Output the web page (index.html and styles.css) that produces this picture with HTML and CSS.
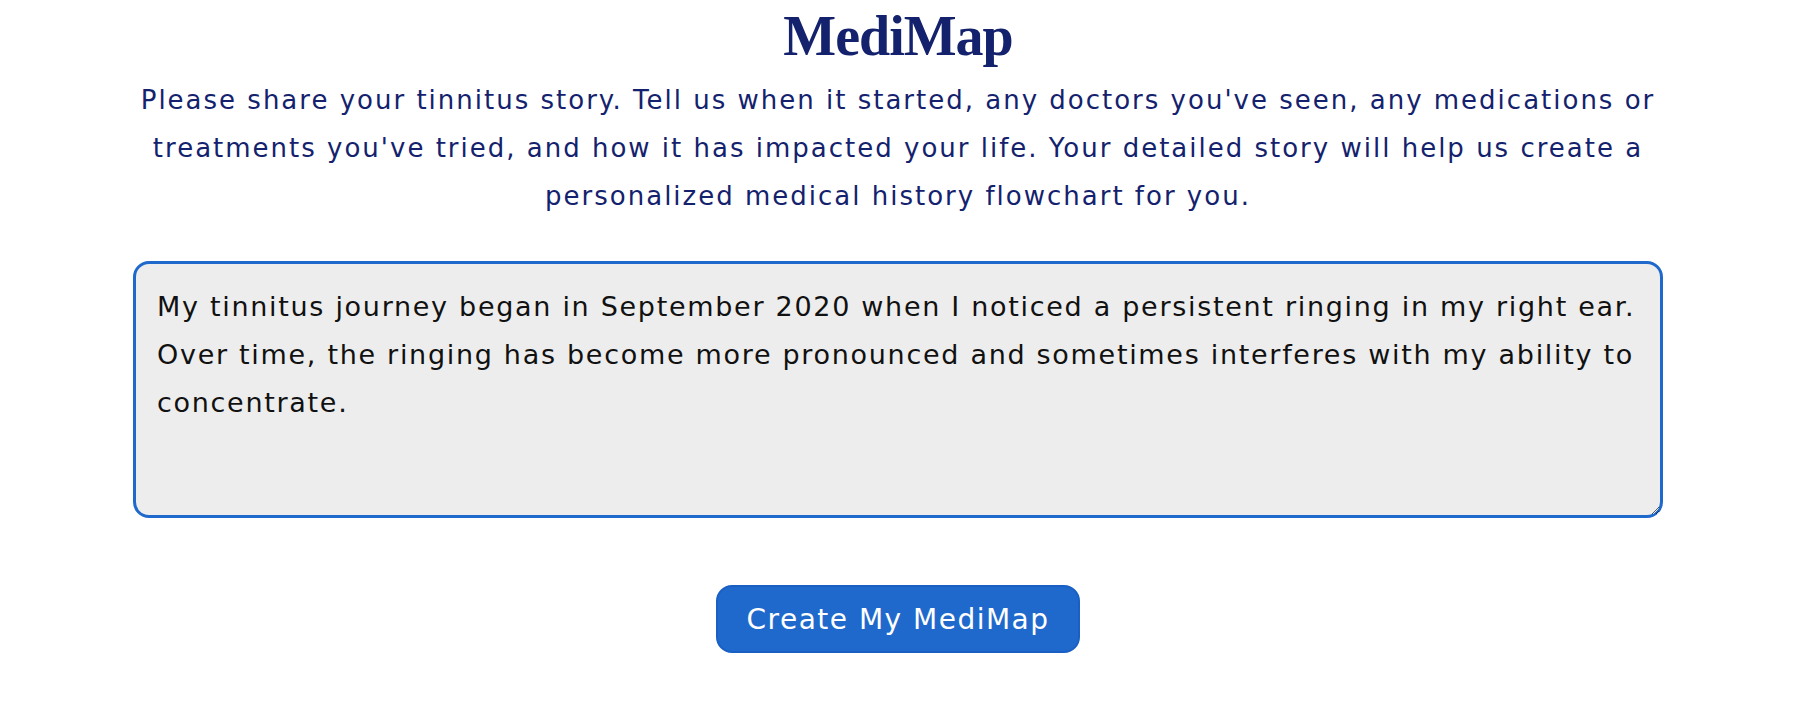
FILE: index.html
```html
<!DOCTYPE html>
<html lang="en">
<head>
<meta charset="utf-8">
<title>MediMap</title>
<link rel="stylesheet" href="styles.css">
</head>
<body>
<main class="page">
  <h1 class="title">MediMap</h1>
  <p class="intro">Please share your tinnitus story. Tell us when it started, any doctors you've seen, any medications or treatments you've tried, and how it has impacted your life. Your detailed story will help us create a personalized medical history flowchart for you.</p>
  <textarea class="story">My tinnitus journey began in September 2020 when I noticed a persistent ringing in my right ear. Over time, the ringing has become more pronounced and sometimes interferes with my ability to concentrate.</textarea>
  <button class="submit" type="button">Create My MediMap</button>
</main>
</body>
</html>
```

FILE: styles.css
```css
html, body {
  margin: 0;
  padding: 0;
  background: #ffffff;
}

.page {
  width: 1530px;
  margin: 0 auto;
  display: flex;
  flex-direction: column;
  align-items: center;
  font-family: "DejaVu Sans", "Liberation Sans", sans-serif;
}

.title {
  margin: 0;
  padding-top: 4px;
  font-family: "Liberation Serif", "DejaVu Serif", serif;
  font-weight: 700;
  font-size: 56px;
  line-height: 64px;
  letter-spacing: -1px;
  color: #14226e;
}

.intro {
  margin: 8px 0 0;
  max-width: 1540px;
  text-align: center;
  font-size: 26px;
  letter-spacing: 2px;
  line-height: 48px;
  color: #14226e;
}

.story {
  box-sizing: border-box;
  margin-top: 41px;
  width: 1530px;
  height: 257px;
  padding: 19px 17px 19px 21px;
  border: 3px solid #1f69cc;
  border-radius: 16px;
  background: #ededed;
  font-family: "DejaVu Sans", "Liberation Sans", sans-serif;
  font-size: 27px;
  letter-spacing: 1.7px;
  line-height: 48px;
  color: #111111;
  outline: none;
}

.submit {
  margin-top: 67px;
  width: 364px;
  height: 68px;
  border: 2px solid #1a60c4;
  border-radius: 16px;
  background: #1f69cc;
  color: #ffffff;
  font-family: "DejaVu Sans", "Liberation Sans", sans-serif;
  font-size: 28px;
  letter-spacing: 1.5px;
  cursor: pointer;
}
```
